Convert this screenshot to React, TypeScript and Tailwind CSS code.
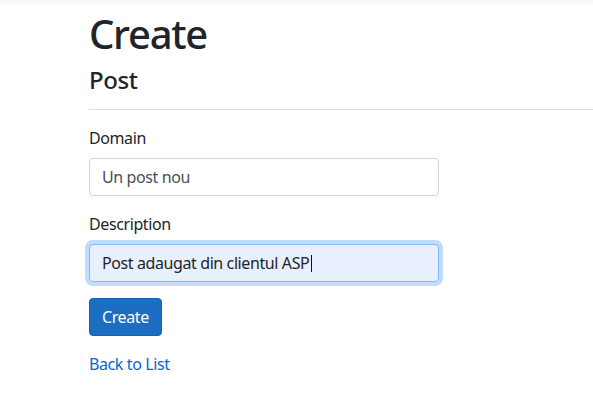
import React from "react";

/* ---------------------------
   Create Post page (ASP.NET scaffold look)
--------------------------- */
export default function App() {
    return (
        <div
            className="min-h-[403px] bg-white text-[#212529] tracking-[-0.025em]"
            style={{ fontFamily: '"Noto Sans", "Open Sans", sans-serif' }}
        >
            {/* navbar shadow bleeding in from above */}
            <div className="h-[8px] bg-gradient-to-b from-[#f7f7f7] to-white" />

            <main className="pl-[89px]">
                <h1 className="mt-[2px] mb-2 text-[40px] leading-[48px] font-medium tracking-[-0.032em]">
                    Create
                </h1>
                <h4 className="text-[24px] leading-[28.8px] font-medium">Post</h4>
                <hr className="mt-[14px] mb-4 border-t border-[#dedede]" />

                <form className="w-[350px]" onSubmit={(e) => e.preventDefault()}>
                    <div className="mb-4">
                        <label className="block mb-2 text-base leading-6">Domain</label>
                        <input
                            className="block w-full h-[38px] px-3 rounded-[4px] border border-[#ced4da] bg-white text-base text-[#495057] outline-none"
                            defaultValue="Un post nou"
                        />
                    </div>

                    <div className="mb-4">
                        <label className="block mb-2 text-base leading-6">Description</label>
                        <div className="relative">
                            <input
                                className="block w-full h-[38px] px-3 rounded-[4px] border border-[#86b7fe] bg-[#e8f0fe] text-base text-[#212529] outline-none shadow-[0_0_0_4px_rgba(13,110,253,0.25)]"
                                defaultValue="Post adaugat din clientul ASP"
                            />
                            {/* text caret after the typed value */}
                            <span className="absolute left-[222px] top-[11px] h-[17px] w-px bg-[#111]" />
                        </div>
                    </div>

                    <button
                        type="submit"
                        className="h-[38px] px-3 rounded-[4px] border border-[#1861ac] bg-[#1b6ec2] text-base text-white"
                    >
                        Create
                    </button>
                </form>

                <div className="mt-4 text-base leading-6">
                    <a href="#" className="text-[#0366d6]">
                        Back to List
                    </a>
                </div>
            </main>
        </div>
    );
}
